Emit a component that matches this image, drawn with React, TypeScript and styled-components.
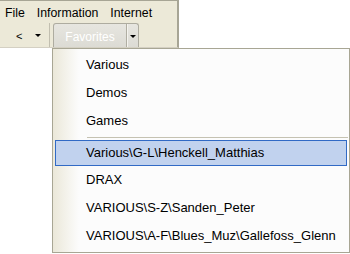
import styled, { createGlobalStyle } from "styled-components";

const GlobalStyle = createGlobalStyle`
  html, body {
    margin: 0;
    padding: 0;
    background: #ffffff;
  }
  body {
    font-family: "Liberation Sans", Arial, sans-serif;
    font-size: 12px;
    color: #000000;
  }
`;

const favorites = [
  "Various",
  "Demos",
  "Games",
  "-",
  "Various\\G-L\\Henckell_Matthias",
  "DRAX",
  "VARIOUS\\S-Z\\Sanden_Peter",
  "VARIOUS\\A-F\\Blues_Muz\\Gallefoss_Glenn",
];

const App = () => {
  return (
    <Page>
      <GlobalStyle />
      <Panel>
        <MenuBar>
          <MenuTitle>File</MenuTitle>
          <MenuTitle>Information</MenuTitle>
          <MenuTitle>Internet</MenuTitle>
        </MenuBar>
        <ToolBar>
          <BackButton>&lt;</BackButton>
          <SmallArrow />
          <Divider />
          <FavButton>
            <FavLabel>Favorites</FavLabel>
            <FavSplit>
              <SmallArrow />
            </FavSplit>
          </FavButton>
        </ToolBar>
      </Panel>

      <Dropdown>
        {favorites.map((f, i) =>
          f === "-" ? (
            <Separator key={i} />
          ) : (
            <Item key={i} $active={i === 4}>
              {f}
            </Item>
          )
        )}
      </Dropdown>
    </Page>
  );
};

export default App;

const Page = styled.div`
  position: relative;
  width: 350px;
  height: 254px;
  overflow: hidden;
`;

const Panel = styled.div`
  width: 177px;
  height: 46px;
  background: #ece9d8;
  border-top: 1px solid #a7a595;
  border-right: 2px solid #a7a595;
  border-bottom: 1px solid #d4d0c3;
  display: flex;
  flex-direction: column;
`;

const MenuBar = styled.div`
  display: flex;
  gap: 12px;
  padding: 2px 0 0 5px;
  height: 20px;
  line-height: 21px;
  font-size: 12.3px;
`;

const MenuTitle = styled.span`
  white-space: nowrap;
`;

const ToolBar = styled.div`
  display: flex;
  align-items: stretch;
  height: 25px;
`;

const BackButton = styled.span`
  width: 15px;
  margin-left: 16px;
  display: flex;
  align-items: center;
  font-size: 11px;
  padding-top: 2px;
`;

const SmallArrow = styled.span`
  align-self: center;
  width: 0;
  height: 0;
  margin: 0 4px 0 4px;
  border-left: 3px solid transparent;
  border-right: 3px solid transparent;
  border-top: 3px solid #000000;
`;

const Divider = styled.span`
  width: 1px;
  margin: 0 0 0 4px;
  background: #c2bfb0;
`;

const FavButton = styled.div`
  display: flex;
  margin-left: 3px;
  width: 84px;
  border: 1px solid #aeaca0;
  border-bottom: none;
  border-radius: 3px 3px 0 0;
  background: linear-gradient(#e7e6e0, #dcdbd4);
`;

const FavLabel = styled.span`
  flex: 1;
  display: flex;
  align-items: center;
  justify-content: center;
  color: #ffffff;
  padding-top: 2px;
`;

const FavSplit = styled.span`
  display: flex;
  align-items: center;
  justify-content: center;
  width: 11px;
  border-left: 1px solid #b0aea2;
  box-shadow: inset 1px 0 0 #f4f3ee;
  padding-top: 1px;
`;

const Dropdown = styled.div`
  position: absolute;
  left: 52px;
  top: 48px;
  width: 296px;
  padding: 2px 0;
  border: 1px solid #a8a694;
  background: linear-gradient(to right, #ebe8d9 0, #fcfcfc 26px, #fcfcfc 100%);
  display: flex;
  flex-direction: column;
  font-size: 13px;
`;

const Item = styled.div<{ $active?: boolean }>`
  height: ${(p) => (p.$active ? "24px" : "28px")};
  line-height: ${(p) => (p.$active ? "24px" : "28px")};
  margin: 0 2px;
  padding-left: 30px;
  border: 1px solid ${(p) => (p.$active ? "#316ac5" : "transparent")};
  background: ${(p) => (p.$active ? "#c1d2ee" : "transparent")};
  white-space: nowrap;
  ${(p) => (p.$active ? "" : "margin-top: -1px; margin-bottom: -1px;")}
`;

const Separator = styled.div`
  height: 5px;
  margin-left: 34px;
  margin-right: 1px;
  background: linear-gradient(
    transparent 0,
    transparent 2px,
    #c5c2b2 2px,
    #c5c2b2 3px,
    transparent 3px
  );
`;
